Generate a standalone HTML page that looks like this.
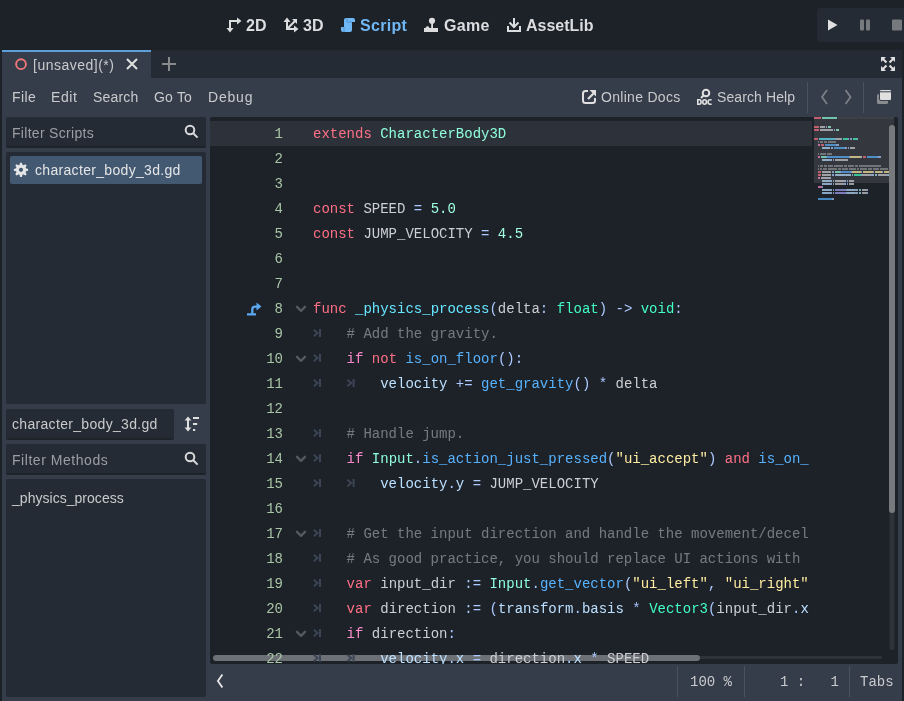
<!DOCTYPE html>
<html><head><meta charset="utf-8">
<style>
*{margin:0;padding:0;box-sizing:border-box}
html,body{width:904px;height:701px;overflow:hidden;background:#1d2128;font-family:"Liberation Sans",sans-serif}
.a{position:absolute}
.ui{position:absolute;color:#c9cacc;font-size:14px;white-space:pre;line-height:14px}
.mainbtn{position:absolute;font-weight:bold;font-size:16px;line-height:16px;color:#dcdddf;top:17px;white-space:pre}
.box{position:absolute;background:#252b34;border-radius:2px}
.le{position:absolute;background:#252b34;border-radius:2px;border-bottom:2px solid #1e2229}
.ln{position:absolute;left:313px;font-family:"Liberation Mono",monospace;font-size:14px;white-space:pre;line-height:25px;color:#cdcfd2}
.num{position:absolute;left:210px;width:73px;text-align:right;font-family:"Liberation Mono",monospace;font-size:14px;line-height:25px;color:#a9c6a6}
.mono{position:absolute;font-family:"Liberation Mono",monospace;font-size:14px;white-space:pre;line-height:14px;color:#c9cacc}
</style></head>
<body>
<div style="will-change:transform;position:absolute;left:0;top:0;width:904px;height:701px;background:#1d2128">
<!-- top bar -->
<div class="mainbtn" style="top:18px;left:246px">2D</div>
<div class="mainbtn" style="top:18px;left:303px">3D</div>
<div class="mainbtn" style="top:18px;left:360px;color:#70b8f5;letter-spacing:0.3px">Script</div>
<div class="mainbtn" style="top:18px;left:444px;letter-spacing:0.3px">Game</div>
<div class="mainbtn" style="top:18px;left:526px">AssetLib</div>
<svg class="a" style="left:0;top:0" width="904" height="50">
 <g fill="none" stroke="#dcdddf" stroke-width="2">
  <path d="M230 31 V21 H239"/>
  <path d="M287 30 V21 M286 29 H295 M287 29 L295 21"/>
  <path d="M514 18 V27 M509.5 22.5 L514 27 L518.5 22.5 M508 26 V31 H520 V26"/>
 </g>
 <g fill="#dcdddf">
  <path d="M226.5 28 H233.5 L230 32.5 Z"/>
  <path d="M237 17.5 L241.5 21 L237 24.5 Z"/>
  <path d="M283.5 22 H290.5 L287 17.5 Z"/>
  <path d="M294 25.5 L298.5 29 L294 32.5 Z"/>
  <path d="M297 19 V24 L292 19 Z"/>
  <path d="M424 28 H425.8 V27 Q427.5 25.3 429.2 27 V28 H431.2 V23 H433 V28 H438 V32 H424 Z"/>
  <circle cx="432" cy="20.8" r="3.1"/>
 </g>
 <path fill="#70b8f5" d="M344 20 Q344 18 346 18 H353 Q355 18 355 20 V22 H352 V30 Q352 32 350 32 H343 Q341 32 341 30 V27 H344 Z"/>
 <path fill="none" stroke="#4a88c2" stroke-width="0.8" d="M347 18.5 V22 H352 M344 27 V32"/>
 <!-- play panel -->
 <rect x="817" y="8" width="100" height="34" rx="3" fill="#252b34"/>
 <path d="M828 19.5 L837.5 25 L828 30.5 Z" fill="#e0e0e0"/>
 <rect x="860" y="19.5" width="4" height="11" rx="1" fill="#76797e"/>
 <rect x="866" y="19.5" width="4" height="11" rx="1" fill="#76797e"/>
 <rect x="892" y="19.5" width="10" height="11" rx="1" fill="#76797e"/>
</svg>

<!-- main panel -->
<div class="a" style="left:2px;top:50px;width:900px;height:651px;background:#363d4a"></div>
<div class="a" style="left:2px;top:50px;width:900px;height:28px;background:#252b34"></div>
<div class="a" style="left:2px;top:50px;width:149px;height:28px;background:#363d4a;border-top:2px solid #5e9fd9"></div>
<div class="ui" style="left:33px;top:58px;letter-spacing:0.5px">[unsaved](*)</div>
<svg class="a" style="left:0;top:50px" width="904" height="68">
 <circle cx="21" cy="14.2" r="4.9" fill="none" stroke="#f27777" stroke-width="1.9"/>
 <path d="M127 9 L137 19 M137 9 L127 19" stroke="#e0e0e0" stroke-width="2" fill="none"/>
 <path d="M169 7 V21 M162 14 H176" stroke="#87898d" stroke-width="2" fill="none"/>
 <!-- fullscreen -->
 <g fill="#e0e0e0">
  <path d="M881 7 H886 L881 12 Z"/><path d="M895 7 H890 L895 12 Z"/>
  <path d="M881 21 H886 L881 16 Z"/><path d="M895 21 H890 L895 16 Z"/>
 </g>
 <path d="M882 8 L886.5 12.5 M894 8 L889.5 12.5 M882 20 L886.5 15.5 M894 20 L889.5 15.5" stroke="#e0e0e0" stroke-width="2"/>
 <!-- online docs icon -->
 <path d="M588 41 H585.5 Q583 41 583 43.5 V50.5 Q583 53 585.5 53 H592.5 Q595 53 595 50.5 V48" fill="none" stroke="#e0e0e0" stroke-width="2"/>
 <path d="M588 49 L593.5 43.5" stroke="#e0e0e0" stroke-width="2.2"/>
 <path d="M589.5 40 H596 V46.5 Z" fill="#e0e0e0"/>
 <!-- search help icon -->
 <circle cx="706" cy="43" r="3.3" fill="none" stroke="#e0e0e0" stroke-width="2"/>
 <path d="M703.5 45.5 L701 48" stroke="#e0e0e0" stroke-width="2"/>
 <g fill="none" stroke="#e0e0e0" stroke-width="1.6">
  <path d="M697.8 49.8 V54.2 H699.3 Q701.1 54.2 701.1 52 Q701.1 49.8 699.3 49.8 Z"/>
  <ellipse cx="704.6" cy="52" rx="1.8" ry="2.2"/>
  <path d="M711.6 50.2 Q711 49.8 710.2 49.8 Q708 49.8 708 52 Q708 54.2 710.2 54.2 Q711 54.2 711.6 53.8"/>
 </g>
 <!-- separators -->
 <rect x="807" y="32" width="1" height="31" fill="#4a5161"/>
 <rect x="863" y="32" width="1" height="31" fill="#4a5161"/>
 <path d="M827 40 L822 47 L827 54 M845.5 40 L850.5 47 L845.5 54" fill="none" stroke="#7c7f85" stroke-width="1.8"/>
 <rect x="877" y="44" width="11" height="10" rx="1.5" fill="#8a8b8e"/>
 <rect x="879.5" y="39.5" width="12" height="11" rx="1.5" fill="#e0e0e0" stroke="#363d4a" stroke-width="1"/>
 <rect x="880" y="41.3" width="11" height="1" fill="#363d4a"/>
</svg>

<!-- menu -->
<div class="ui" style="left:12px;top:90px;letter-spacing:0.4px">File</div>
<div class="ui" style="left:51px;top:90px;letter-spacing:0.6px">Edit</div>
<div class="ui" style="left:93px;top:90px;letter-spacing:0.2px">Search</div>
<div class="ui" style="left:154px;top:90px;letter-spacing:0.2px">Go To</div>
<div class="ui" style="left:208px;top:90px;letter-spacing:0.8px">Debug</div>
<div class="ui" style="left:601px;top:90px;letter-spacing:0.3px">Online Docs</div>
<div class="ui" style="left:717px;top:90px;letter-spacing:0.1px">Search Help</div>

<!-- left panel -->
<div class="le" style="left:6px;top:117px;width:200px;height:31px"></div>
<div class="ui" style="left:12px;top:126px;color:#9b9fa5;letter-spacing:0.3px">Filter Scripts</div>
<div class="box" style="left:6px;top:152px;width:200px;height:252px"></div>
<div class="a" style="left:10px;top:156px;width:192px;height:28px;background:#435971;border-radius:2px"></div>
<div class="ui" style="left:35px;top:163px;color:#e4e5e6;letter-spacing:0.32px">character_body_3d.gd</div>
<div class="le" style="left:6px;top:409px;width:168px;height:31px"></div>
<div class="ui" style="left:12px;top:417px;letter-spacing:0.32px">character_body_3d.gd</div>
<div class="le" style="left:6px;top:444px;width:200px;height:31px"></div>
<div class="ui" style="left:12px;top:453px;color:#9b9fa5;letter-spacing:0.54px">Filter Methods</div>
<div class="box" style="left:6px;top:479px;width:200px;height:218px"></div>
<div class="ui" style="left:12px;top:491px;letter-spacing:0.03px">_physics_process</div>
<svg class="a" style="left:0;top:110px" width="210" height="340">
 <g fill="none" stroke="#d8d9db" stroke-width="2">
  <circle cx="190" cy="20" r="4.3"/><path d="M193 23 L197.6 27.6"/>
 </g>
 <!-- gear -->
 <g transform="translate(21,59.8)" fill="#e4e5e6">
  <circle r="5"/>
  <g id="teeth"><path d="M-1.8 -4 L-0.9 -7.1 H0.9 L1.8 -4 Z"/></g>
  <use href="#teeth" transform="rotate(45)"/><use href="#teeth" transform="rotate(90)"/><use href="#teeth" transform="rotate(135)"/>
  <use href="#teeth" transform="rotate(180)"/><use href="#teeth" transform="rotate(225)"/><use href="#teeth" transform="rotate(270)"/><use href="#teeth" transform="rotate(315)"/>
  <circle r="2.1" fill="#435971"/>
 </g>
 <!-- sort icon -->
 <g fill="#e0e0e0">
  <rect x="187" y="309" width="2" height="11"/>
  <path d="M184.6 310.6 L188 306.6 L191.4 310.6 Z"/>
  <path d="M184.6 317.6 L188 321.4 L191.4 317.6 Z"/>
  <rect x="193" y="307" width="6" height="2"/>
  <rect x="193" y="313" width="4.2" height="2"/>
  <rect x="193" y="319" width="2.2" height="2"/>
 </g>
</svg>
<svg class="a" style="left:0;top:440px" width="210" height="40">
 <g fill="none" stroke="#d8d9db" stroke-width="2">
  <circle cx="190" cy="17" r="4.3"/><path d="M193 20 L197.6 24.6"/>
 </g>
</svg>

<!-- code editor -->
<div class="a" style="left:210px;top:117px;width:688px;height:547px;background:#1d2128;border-radius:2px"></div>
<div class="a" style="left:210px;top:121px;width:602px;height:25px;background:#2d3139"></div>
<svg class="a" style="left:0;top:0" width="904" height="701">
<!-- scrollbars -->
<rect x="889.5" y="183" width="5" height="467" rx="2" fill="#2e3239"/>
<rect x="213" y="656" width="669" height="3" rx="1.5" fill="#2e3239"/>
<rect x="213" y="655" width="487" height="6" rx="3" fill="#6d7075"/>
</svg>
<div class="a" style="left:0;top:0;width:812px;height:664px;overflow:hidden">
<div class="num" style="top:122px">1</div>
<div class="num" style="top:147px">2</div>
<div class="num" style="top:172px">3</div>
<div class="num" style="top:197px">4</div>
<div class="num" style="top:222px">5</div>
<div class="num" style="top:247px">6</div>
<div class="num" style="top:272px">7</div>
<div class="num" style="top:297px">8</div>
<div class="num" style="top:322px">9</div>
<div class="num" style="top:347px">10</div>
<div class="num" style="top:372px">11</div>
<div class="num" style="top:397px">12</div>
<div class="num" style="top:422px">13</div>
<div class="num" style="top:447px">14</div>
<div class="num" style="top:472px">15</div>
<div class="num" style="top:497px">16</div>
<div class="num" style="top:522px">17</div>
<div class="num" style="top:547px">18</div>
<div class="num" style="top:572px">19</div>
<div class="num" style="top:597px">20</div>
<div class="num" style="top:622px">21</div>
<div class="num" style="top:647px">22</div>
<div class="ln" style="top:122px"><span style="color:#ff7085">extends</span><span style="color:#cdcfd2"> </span><span style="color:#8fffdb">CharacterBody3D</span></div>
<div class="ln" style="top:147px"></div>
<div class="ln" style="top:172px"></div>
<div class="ln" style="top:197px"><span style="color:#ff7085">const</span><span style="color:#cdcfd2"> SPEED </span><span style="color:#abc9ff">=</span><span style="color:#cdcfd2"> </span><span style="color:#a1ffe0">5.0</span></div>
<div class="ln" style="top:222px"><span style="color:#ff7085">const</span><span style="color:#cdcfd2"> JUMP_VELOCITY </span><span style="color:#abc9ff">=</span><span style="color:#cdcfd2"> </span><span style="color:#a1ffe0">4.5</span></div>
<div class="ln" style="top:247px"></div>
<div class="ln" style="top:272px"></div>
<div class="ln" style="top:297px"><span style="color:#ff7085">func</span><span style="color:#cdcfd2"> </span><span style="color:#66e6ff">_physics_process</span><span style="color:#abc9ff">(</span><span style="color:#cdcfd2">delta</span><span style="color:#abc9ff">:</span><span style="color:#cdcfd2"> </span><span style="color:#42ffc2">float</span><span style="color:#abc9ff">)</span><span style="color:#cdcfd2"> </span><span style="color:#abc9ff">-&gt;</span><span style="color:#cdcfd2"> </span><span style="color:#42ffc2">void</span><span style="color:#abc9ff">:</span></div>
<div class="ln" style="top:322px">    <span style="color:#cdcfd2;opacity:0.5"># Add the gravity.</span></div>
<div class="ln" style="top:347px">    <span style="color:#ff8ccc">if</span><span style="color:#cdcfd2"> </span><span style="color:#ff7085">not</span><span style="color:#cdcfd2"> </span><span style="color:#57b3ff">is_on_floor</span><span style="color:#abc9ff">():</span></div>
<div class="ln" style="top:372px">        <span style="color:#bce0ff">velocity</span><span style="color:#cdcfd2"> </span><span style="color:#abc9ff">+=</span><span style="color:#cdcfd2"> </span><span style="color:#57b3ff">get_gravity</span><span style="color:#abc9ff">()</span><span style="color:#cdcfd2"> </span><span style="color:#abc9ff">*</span><span style="color:#cdcfd2"> delta</span></div>
<div class="ln" style="top:397px"></div>
<div class="ln" style="top:422px">    <span style="color:#cdcfd2;opacity:0.5"># Handle jump.</span></div>
<div class="ln" style="top:447px">    <span style="color:#ff8ccc">if</span><span style="color:#cdcfd2"> </span><span style="color:#8fffdb">Input</span><span style="color:#abc9ff">.</span><span style="color:#57b3ff">is_action_just_pressed</span><span style="color:#abc9ff">(</span><span style="color:#ffeda1">&quot;ui_accept&quot;</span><span style="color:#abc9ff">)</span><span style="color:#cdcfd2"> </span><span style="color:#ff7085">and</span><span style="color:#cdcfd2"> </span><span style="color:#57b3ff">is_on_</span></div>
<div class="ln" style="top:472px">        <span style="color:#bce0ff">velocity</span><span style="color:#abc9ff">.</span><span style="color:#bce0ff">y</span><span style="color:#cdcfd2"> </span><span style="color:#abc9ff">=</span><span style="color:#cdcfd2"> JUMP_VELOCITY</span></div>
<div class="ln" style="top:497px"></div>
<div class="ln" style="top:522px">    <span style="color:#cdcfd2;opacity:0.5"># Get the input direction and handle the movement/decel</span></div>
<div class="ln" style="top:547px">    <span style="color:#cdcfd2;opacity:0.5"># As good practice, you should replace UI actions with </span></div>
<div class="ln" style="top:572px">    <span style="color:#ff7085">var</span><span style="color:#cdcfd2"> input_dir </span><span style="color:#abc9ff">:=</span><span style="color:#cdcfd2"> </span><span style="color:#8fffdb">Input</span><span style="color:#abc9ff">.</span><span style="color:#57b3ff">get_vector</span><span style="color:#abc9ff">(</span><span style="color:#ffeda1">&quot;ui_left&quot;</span><span style="color:#abc9ff">, </span><span style="color:#ffeda1">&quot;ui_right&quot;</span></div>
<div class="ln" style="top:597px">    <span style="color:#ff7085">var</span><span style="color:#cdcfd2"> direction </span><span style="color:#abc9ff">:=</span><span style="color:#cdcfd2"> </span><span style="color:#abc9ff">(</span><span style="color:#bce0ff">transform</span><span style="color:#abc9ff">.</span><span style="color:#bce0ff">basis</span><span style="color:#cdcfd2"> </span><span style="color:#abc9ff">*</span><span style="color:#cdcfd2"> </span><span style="color:#42ffc2">Vector3</span><span style="color:#abc9ff">(</span><span style="color:#cdcfd2">input_dir</span><span style="color:#abc9ff">.</span><span style="color:#bce0ff">x</span></div>
<div class="ln" style="top:622px">    <span style="color:#ff8ccc">if</span><span style="color:#cdcfd2"> direction</span><span style="color:#abc9ff">:</span></div>
<div class="ln" style="top:647px">        <span style="color:#bce0ff">velocity</span><span style="color:#abc9ff">.</span><span style="color:#bce0ff">x</span><span style="color:#cdcfd2"> </span><span style="color:#abc9ff">=</span><span style="color:#cdcfd2"> direction</span><span style="color:#abc9ff">.</span><span style="color:#bce0ff">x</span><span style="color:#cdcfd2"> </span><span style="color:#abc9ff">*</span><span style="color:#cdcfd2"> SPEED</span></div>
</div>
<svg class="a" style="left:0;top:0" width="904" height="701">
<defs>
<g id="tm"><path d="M0.8 0.8 L4.6 4 L0.8 7.2" fill="none" stroke="#3c4555" stroke-width="2"/><rect x="6" y="0" width="2" height="8" fill="#3c4555"/></g>
<path id="fold" d="M297 306.8 L301 310.8 L305 306.8" fill="none" stroke="#55585e" stroke-width="2.4" stroke-linecap="round" stroke-linejoin="round"/>
</defs>
<use href="#tm" x="313.0" y="329"/>
<use href="#tm" x="313.0" y="354"/>
<use href="#tm" x="313.0" y="379"/>
<use href="#tm" x="346.6" y="379"/>
<use href="#tm" x="313.0" y="429"/>
<use href="#tm" x="313.0" y="454"/>
<use href="#tm" x="313.0" y="479"/>
<use href="#tm" x="346.6" y="479"/>
<use href="#tm" x="313.0" y="529"/>
<use href="#tm" x="313.0" y="554"/>
<use href="#tm" x="313.0" y="579"/>
<use href="#tm" x="313.0" y="604"/>
<use href="#tm" x="313.0" y="629"/>
<use href="#tm" x="313.0" y="654"/>
<use href="#tm" x="346.6" y="654"/>
<use href="#fold" y="0"/>
<use href="#fold" y="50"/>
<use href="#fold" y="150"/>
<use href="#fold" y="225"/>
<use href="#fold" y="325"/>
<!-- override icon -->
<path d="M247 314.4 H256 M252.3 314 V309.5 Q252.3 306.6 255.2 306.6 H257.5" fill="none" stroke="#5aa8f0" stroke-width="2.3"/>
<path d="M256.5 302.5 L261.5 306.5 L256.5 310.5 Z" fill="#5aa8f0"/>
<!-- minimap -->
<rect x="838" y="117" width="56" height="2" fill="#ffffff" fill-opacity="0.05"/>
<rect x="814" y="117" width="80" height="66" fill="#ffffff" fill-opacity="0.1"/>
<rect x="814" y="117" width="7" height="2" fill="#ff7085" fill-opacity="0.7"/>
<rect x="822" y="117" width="15" height="2" fill="#8fffdb" fill-opacity="0.7"/>
<rect x="814" y="126" width="5" height="2" fill="#ff7085" fill-opacity="0.7"/>
<rect x="820" y="126" width="5" height="2" fill="#cdcfd2" fill-opacity="0.7"/>
<rect x="826" y="126" width="1" height="2" fill="#abc9ff" fill-opacity="0.7"/>
<rect x="828" y="126" width="3" height="2" fill="#a1ffe0" fill-opacity="0.7"/>
<rect x="814" y="129" width="5" height="2" fill="#ff7085" fill-opacity="0.7"/>
<rect x="820" y="129" width="13" height="2" fill="#cdcfd2" fill-opacity="0.7"/>
<rect x="834" y="129" width="1" height="2" fill="#abc9ff" fill-opacity="0.7"/>
<rect x="836" y="129" width="3" height="2" fill="#a1ffe0" fill-opacity="0.7"/>
<rect x="814" y="138" width="4" height="2" fill="#ff7085" fill-opacity="0.7"/>
<rect x="819" y="138" width="16" height="2" fill="#66e6ff" fill-opacity="0.7"/>
<rect x="835" y="138" width="1" height="2" fill="#abc9ff" fill-opacity="0.7"/>
<rect x="836" y="138" width="5" height="2" fill="#cdcfd2" fill-opacity="0.7"/>
<rect x="841" y="138" width="1" height="2" fill="#abc9ff" fill-opacity="0.7"/>
<rect x="843" y="138" width="5" height="2" fill="#42ffc2" fill-opacity="0.7"/>
<rect x="848" y="138" width="1" height="2" fill="#abc9ff" fill-opacity="0.7"/>
<rect x="850" y="138" width="2" height="2" fill="#abc9ff" fill-opacity="0.7"/>
<rect x="853" y="138" width="4" height="2" fill="#42ffc2" fill-opacity="0.7"/>
<rect x="857" y="138" width="1" height="2" fill="#abc9ff" fill-opacity="0.7"/>
<rect x="818" y="141" width="1" height="2" fill="#cdcfd2" fill-opacity="0.4"/>
<rect x="820" y="141" width="3" height="2" fill="#cdcfd2" fill-opacity="0.4"/>
<rect x="824" y="141" width="3" height="2" fill="#cdcfd2" fill-opacity="0.4"/>
<rect x="828" y="141" width="8" height="2" fill="#cdcfd2" fill-opacity="0.4"/>
<rect x="818" y="144" width="2" height="2" fill="#ff8ccc" fill-opacity="0.7"/>
<rect x="821" y="144" width="3" height="2" fill="#ff7085" fill-opacity="0.7"/>
<rect x="825" y="144" width="11" height="2" fill="#57b3ff" fill-opacity="0.7"/>
<rect x="836" y="144" width="3" height="2" fill="#abc9ff" fill-opacity="0.7"/>
<rect x="822" y="147" width="8" height="2" fill="#bce0ff" fill-opacity="0.7"/>
<rect x="831" y="147" width="2" height="2" fill="#abc9ff" fill-opacity="0.7"/>
<rect x="834" y="147" width="11" height="2" fill="#57b3ff" fill-opacity="0.7"/>
<rect x="845" y="147" width="2" height="2" fill="#abc9ff" fill-opacity="0.7"/>
<rect x="848" y="147" width="1" height="2" fill="#abc9ff" fill-opacity="0.7"/>
<rect x="850" y="147" width="5" height="2" fill="#cdcfd2" fill-opacity="0.7"/>
<rect x="818" y="153" width="1" height="2" fill="#cdcfd2" fill-opacity="0.4"/>
<rect x="820" y="153" width="6" height="2" fill="#cdcfd2" fill-opacity="0.4"/>
<rect x="827" y="153" width="5" height="2" fill="#cdcfd2" fill-opacity="0.4"/>
<rect x="818" y="156" width="2" height="2" fill="#ff8ccc" fill-opacity="0.7"/>
<rect x="821" y="156" width="5" height="2" fill="#8fffdb" fill-opacity="0.7"/>
<rect x="826" y="156" width="1" height="2" fill="#abc9ff" fill-opacity="0.7"/>
<rect x="827" y="156" width="22" height="2" fill="#57b3ff" fill-opacity="0.7"/>
<rect x="849" y="156" width="1" height="2" fill="#abc9ff" fill-opacity="0.7"/>
<rect x="850" y="156" width="11" height="2" fill="#ffeda1" fill-opacity="0.7"/>
<rect x="861" y="156" width="1" height="2" fill="#abc9ff" fill-opacity="0.7"/>
<rect x="863" y="156" width="3" height="2" fill="#ff7085" fill-opacity="0.7"/>
<rect x="867" y="156" width="11" height="2" fill="#57b3ff" fill-opacity="0.7"/>
<rect x="878" y="156" width="3" height="2" fill="#abc9ff" fill-opacity="0.7"/>
<rect x="822" y="159" width="8" height="2" fill="#bce0ff" fill-opacity="0.7"/>
<rect x="830" y="159" width="1" height="2" fill="#abc9ff" fill-opacity="0.7"/>
<rect x="831" y="159" width="1" height="2" fill="#bce0ff" fill-opacity="0.7"/>
<rect x="833" y="159" width="1" height="2" fill="#abc9ff" fill-opacity="0.7"/>
<rect x="835" y="159" width="13" height="2" fill="#cdcfd2" fill-opacity="0.7"/>
<rect x="818" y="165" width="1" height="2" fill="#cdcfd2" fill-opacity="0.4"/>
<rect x="820" y="165" width="3" height="2" fill="#cdcfd2" fill-opacity="0.4"/>
<rect x="824" y="165" width="3" height="2" fill="#cdcfd2" fill-opacity="0.4"/>
<rect x="828" y="165" width="5" height="2" fill="#cdcfd2" fill-opacity="0.4"/>
<rect x="834" y="165" width="9" height="2" fill="#cdcfd2" fill-opacity="0.4"/>
<rect x="844" y="165" width="3" height="2" fill="#cdcfd2" fill-opacity="0.4"/>
<rect x="848" y="165" width="6" height="2" fill="#cdcfd2" fill-opacity="0.4"/>
<rect x="855" y="165" width="3" height="2" fill="#cdcfd2" fill-opacity="0.4"/>
<rect x="859" y="165" width="22" height="2" fill="#cdcfd2" fill-opacity="0.4"/>
<rect x="818" y="168" width="1" height="2" fill="#cdcfd2" fill-opacity="0.4"/>
<rect x="820" y="168" width="2" height="2" fill="#cdcfd2" fill-opacity="0.4"/>
<rect x="823" y="168" width="4" height="2" fill="#cdcfd2" fill-opacity="0.4"/>
<rect x="828" y="168" width="9" height="2" fill="#cdcfd2" fill-opacity="0.4"/>
<rect x="838" y="168" width="3" height="2" fill="#cdcfd2" fill-opacity="0.4"/>
<rect x="842" y="168" width="6" height="2" fill="#cdcfd2" fill-opacity="0.4"/>
<rect x="849" y="168" width="7" height="2" fill="#cdcfd2" fill-opacity="0.4"/>
<rect x="857" y="168" width="2" height="2" fill="#cdcfd2" fill-opacity="0.4"/>
<rect x="860" y="168" width="7" height="2" fill="#cdcfd2" fill-opacity="0.4"/>
<rect x="868" y="168" width="4" height="2" fill="#cdcfd2" fill-opacity="0.4"/>
<rect x="873" y="168" width="6" height="2" fill="#cdcfd2" fill-opacity="0.4"/>
<rect x="880" y="168" width="8" height="2" fill="#cdcfd2" fill-opacity="0.4"/>
<rect x="889" y="168" width="5" height="2" fill="#cdcfd2" fill-opacity="0.4"/>
<rect x="818" y="171" width="3" height="2" fill="#ff7085" fill-opacity="0.7"/>
<rect x="822" y="171" width="9" height="2" fill="#cdcfd2" fill-opacity="0.7"/>
<rect x="832" y="171" width="2" height="2" fill="#abc9ff" fill-opacity="0.7"/>
<rect x="835" y="171" width="5" height="2" fill="#8fffdb" fill-opacity="0.7"/>
<rect x="840" y="171" width="1" height="2" fill="#abc9ff" fill-opacity="0.7"/>
<rect x="841" y="171" width="10" height="2" fill="#57b3ff" fill-opacity="0.7"/>
<rect x="851" y="171" width="1" height="2" fill="#abc9ff" fill-opacity="0.7"/>
<rect x="852" y="171" width="9" height="2" fill="#ffeda1" fill-opacity="0.7"/>
<rect x="861" y="171" width="1" height="2" fill="#abc9ff" fill-opacity="0.7"/>
<rect x="863" y="171" width="10" height="2" fill="#ffeda1" fill-opacity="0.7"/>
<rect x="873" y="171" width="1" height="2" fill="#abc9ff" fill-opacity="0.7"/>
<rect x="875" y="171" width="7" height="2" fill="#ffeda1" fill-opacity="0.7"/>
<rect x="882" y="171" width="1" height="2" fill="#abc9ff" fill-opacity="0.7"/>
<rect x="884" y="171" width="9" height="2" fill="#ffeda1" fill-opacity="0.7"/>
<rect x="893" y="171" width="1" height="2" fill="#abc9ff" fill-opacity="0.7"/>
<rect x="818" y="174" width="3" height="2" fill="#ff7085" fill-opacity="0.7"/>
<rect x="822" y="174" width="9" height="2" fill="#cdcfd2" fill-opacity="0.7"/>
<rect x="832" y="174" width="2" height="2" fill="#abc9ff" fill-opacity="0.7"/>
<rect x="835" y="174" width="1" height="2" fill="#abc9ff" fill-opacity="0.7"/>
<rect x="836" y="174" width="9" height="2" fill="#bce0ff" fill-opacity="0.7"/>
<rect x="845" y="174" width="1" height="2" fill="#abc9ff" fill-opacity="0.7"/>
<rect x="846" y="174" width="5" height="2" fill="#bce0ff" fill-opacity="0.7"/>
<rect x="852" y="174" width="1" height="2" fill="#abc9ff" fill-opacity="0.7"/>
<rect x="854" y="174" width="7" height="2" fill="#42ffc2" fill-opacity="0.7"/>
<rect x="861" y="174" width="1" height="2" fill="#abc9ff" fill-opacity="0.7"/>
<rect x="862" y="174" width="9" height="2" fill="#cdcfd2" fill-opacity="0.7"/>
<rect x="871" y="174" width="1" height="2" fill="#abc9ff" fill-opacity="0.7"/>
<rect x="872" y="174" width="1" height="2" fill="#bce0ff" fill-opacity="0.7"/>
<rect x="873" y="174" width="1" height="2" fill="#abc9ff" fill-opacity="0.7"/>
<rect x="875" y="174" width="1" height="2" fill="#a1ffe0" fill-opacity="0.7"/>
<rect x="876" y="174" width="1" height="2" fill="#abc9ff" fill-opacity="0.7"/>
<rect x="878" y="174" width="9" height="2" fill="#cdcfd2" fill-opacity="0.7"/>
<rect x="887" y="174" width="1" height="2" fill="#abc9ff" fill-opacity="0.7"/>
<rect x="888" y="174" width="1" height="2" fill="#bce0ff" fill-opacity="0.7"/>
<rect x="889" y="174" width="3" height="2" fill="#abc9ff" fill-opacity="0.7"/>
<rect x="892" y="174" width="2" height="2" fill="#57b3ff" fill-opacity="0.7"/>
<rect x="818" y="177" width="2" height="2" fill="#ff8ccc" fill-opacity="0.7"/>
<rect x="821" y="177" width="9" height="2" fill="#cdcfd2" fill-opacity="0.7"/>
<rect x="830" y="177" width="1" height="2" fill="#abc9ff" fill-opacity="0.7"/>
<rect x="822" y="180" width="8" height="2" fill="#bce0ff" fill-opacity="0.7"/>
<rect x="830" y="180" width="1" height="2" fill="#abc9ff" fill-opacity="0.7"/>
<rect x="831" y="180" width="1" height="2" fill="#bce0ff" fill-opacity="0.7"/>
<rect x="833" y="180" width="1" height="2" fill="#abc9ff" fill-opacity="0.7"/>
<rect x="835" y="180" width="9" height="2" fill="#cdcfd2" fill-opacity="0.7"/>
<rect x="844" y="180" width="1" height="2" fill="#abc9ff" fill-opacity="0.7"/>
<rect x="845" y="180" width="1" height="2" fill="#bce0ff" fill-opacity="0.7"/>
<rect x="847" y="180" width="1" height="2" fill="#abc9ff" fill-opacity="0.7"/>
<rect x="849" y="180" width="5" height="2" fill="#cdcfd2" fill-opacity="0.7"/>
<rect x="822" y="183" width="8" height="2" fill="#bce0ff" fill-opacity="0.7"/>
<rect x="830" y="183" width="1" height="2" fill="#abc9ff" fill-opacity="0.7"/>
<rect x="831" y="183" width="1" height="2" fill="#bce0ff" fill-opacity="0.7"/>
<rect x="833" y="183" width="1" height="2" fill="#abc9ff" fill-opacity="0.7"/>
<rect x="835" y="183" width="9" height="2" fill="#cdcfd2" fill-opacity="0.7"/>
<rect x="844" y="183" width="1" height="2" fill="#abc9ff" fill-opacity="0.7"/>
<rect x="845" y="183" width="1" height="2" fill="#bce0ff" fill-opacity="0.7"/>
<rect x="847" y="183" width="1" height="2" fill="#abc9ff" fill-opacity="0.7"/>
<rect x="849" y="183" width="5" height="2" fill="#cdcfd2" fill-opacity="0.7"/>
<rect x="818" y="186" width="4" height="2" fill="#ff8ccc" fill-opacity="0.7"/>
<rect x="822" y="186" width="1" height="2" fill="#abc9ff" fill-opacity="0.7"/>
<rect x="822" y="189" width="8" height="2" fill="#bce0ff" fill-opacity="0.7"/>
<rect x="830" y="189" width="1" height="2" fill="#abc9ff" fill-opacity="0.7"/>
<rect x="831" y="189" width="1" height="2" fill="#bce0ff" fill-opacity="0.7"/>
<rect x="833" y="189" width="1" height="2" fill="#abc9ff" fill-opacity="0.7"/>
<rect x="835" y="189" width="11" height="2" fill="#a3a3f5" fill-opacity="0.7"/>
<rect x="846" y="189" width="1" height="2" fill="#abc9ff" fill-opacity="0.7"/>
<rect x="847" y="189" width="8" height="2" fill="#bce0ff" fill-opacity="0.7"/>
<rect x="855" y="189" width="1" height="2" fill="#abc9ff" fill-opacity="0.7"/>
<rect x="856" y="189" width="1" height="2" fill="#bce0ff" fill-opacity="0.7"/>
<rect x="857" y="189" width="1" height="2" fill="#abc9ff" fill-opacity="0.7"/>
<rect x="859" y="189" width="1" height="2" fill="#a1ffe0" fill-opacity="0.7"/>
<rect x="860" y="189" width="1" height="2" fill="#abc9ff" fill-opacity="0.7"/>
<rect x="862" y="189" width="5" height="2" fill="#cdcfd2" fill-opacity="0.7"/>
<rect x="867" y="189" width="1" height="2" fill="#abc9ff" fill-opacity="0.7"/>
<rect x="822" y="192" width="8" height="2" fill="#bce0ff" fill-opacity="0.7"/>
<rect x="830" y="192" width="1" height="2" fill="#abc9ff" fill-opacity="0.7"/>
<rect x="831" y="192" width="1" height="2" fill="#bce0ff" fill-opacity="0.7"/>
<rect x="833" y="192" width="1" height="2" fill="#abc9ff" fill-opacity="0.7"/>
<rect x="835" y="192" width="11" height="2" fill="#a3a3f5" fill-opacity="0.7"/>
<rect x="846" y="192" width="1" height="2" fill="#abc9ff" fill-opacity="0.7"/>
<rect x="847" y="192" width="8" height="2" fill="#bce0ff" fill-opacity="0.7"/>
<rect x="855" y="192" width="1" height="2" fill="#abc9ff" fill-opacity="0.7"/>
<rect x="856" y="192" width="1" height="2" fill="#bce0ff" fill-opacity="0.7"/>
<rect x="857" y="192" width="1" height="2" fill="#abc9ff" fill-opacity="0.7"/>
<rect x="859" y="192" width="1" height="2" fill="#a1ffe0" fill-opacity="0.7"/>
<rect x="860" y="192" width="1" height="2" fill="#abc9ff" fill-opacity="0.7"/>
<rect x="862" y="192" width="5" height="2" fill="#cdcfd2" fill-opacity="0.7"/>
<rect x="867" y="192" width="1" height="2" fill="#abc9ff" fill-opacity="0.7"/>
<rect x="818" y="198" width="14" height="2" fill="#57b3ff" fill-opacity="0.7"/>
<rect x="832" y="198" width="2" height="2" fill="#abc9ff" fill-opacity="0.7"/>
<rect x="889" y="125" width="6" height="388" rx="3" fill="#77797d"/>
</svg>

<!-- status bar -->
<svg class="a" style="left:0;top:664px" width="904" height="37">
 <path d="M222.4 10.5 L217.9 17 L222.4 23.5" fill="none" stroke="#e6e6e6" stroke-width="1.8"/>
 <rect x="677" y="2" width="1" height="31" fill="#4a5161"/>
 <rect x="744" y="2" width="1" height="31" fill="#4a5161"/>
 <rect x="849" y="2" width="1" height="31" fill="#4a5161"/>
</svg>
<div class="mono" style="left:690px;top:675px">100 %</div>
<div class="mono" style="left:780px;top:675px">1 :   1</div>
<div class="mono" style="left:860px;top:675px">Tabs</div>
</div>
</body></html>
